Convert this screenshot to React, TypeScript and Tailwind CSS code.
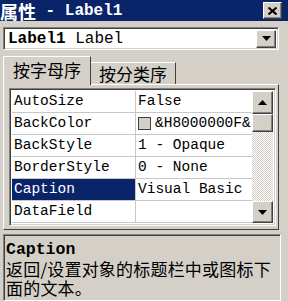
const raised =
  'border border-t-white border-l-white border-r-[#404040] border-b-[#404040] shadow-[inset_-1px_-1px_0_#808080]'
const sunken =
  'border border-t-[#808080] border-l-[#808080] border-r-white border-b-white shadow-[inset_1px_1px_0_#404040,inset_-1px_-1px_0_#d4d0c8]'

const Arrow = ({ up }: { up?: boolean }) => (
  <svg width="9" height="5" viewBox="0 0 9 5">
    <polygon points={up ? '4.5,0 9,5 0,5' : '0,0 9,0 4.5,5'} fill="#000" />
  </svg>
)

const rows: { name: string; value: string; swatch?: boolean; selected?: boolean }[] = [
  { name: 'AutoSize', value: 'False' },
  { name: 'BackColor', value: '&H8000000F&', swatch: true },
  { name: 'BackStyle', value: '1 - Opaque' },
  { name: 'BorderStyle', value: '0 - None' },
  { name: 'Caption', value: 'Visual Basic', selected: true },
  { name: 'DataField', value: '' },
]

const PropRow = ({ row }: { row: (typeof rows)[number] }) => (
  <div className="flex h-[22px] border-b border-[#c8c8c8]">
    <div
      className={`w-[124px] shrink-0 border-r border-[#c8c8c8] pl-[2px] leading-[21px] ${
        row.selected ? 'bg-[#0a246a] text-white' : 'text-black'
      }`}
    >
      {row.name}
    </div>
    <div className="flex flex-1 items-center gap-[4px] overflow-hidden whitespace-nowrap pl-[2px] leading-[21px]">
      {row.swatch && <div className="h-[13px] w-[13px] shrink-0 border border-[#404040] bg-[#d4d0c8]" />}
      <span>{row.value}</span>
    </div>
  </div>
)

export default function App() {
  return (
    <div className="relative flex h-[301px] w-[288px] flex-col overflow-hidden bg-[#d4d0c8] font-['Liberation_Mono','Noto_Sans_CJK_SC',monospace]">
      {/* title bar */}
      <div className="flex h-[21px] shrink-0 items-center justify-between bg-[#0a246a] pr-[6px]">
        <span className="flex items-center whitespace-pre font-bold leading-none text-white">
          <span className="text-[18px] font-['Noto_Sans_CJK_SC',sans-serif]">属性</span>
          <span className="text-[16px]"> - Label1</span>
        </span>
        <div className={`flex h-[17px] w-[19px] items-center justify-center bg-[#d4d0c8] ${raised}`}>
          <svg width="9" height="8" viewBox="0 0 9 8">
            <path d="M0.5 0.5 L8.5 7.5 M8.5 0.5 L0.5 7.5" stroke="#000" strokeWidth="2" />
          </svg>
        </div>
      </div>

      {/* object combobox */}
      <div className={`ml-[3px] mt-[6px] flex h-[23px] w-[276px] items-center bg-white pl-[4px] pr-[2px] ${sunken}`}>
        <span className="flex-1 text-[16px] leading-none text-black">
          <b>Label1</b> Label
        </span>
        <div className={`flex h-[18px] w-[20px] items-center justify-center bg-[#d4d0c8] ${raised}`}>
          <Arrow />
        </div>
      </div>

      {/* tabs */}
      <div className="ml-[3px] mt-[6px] flex h-[29px] items-end">
        <div className="relative z-10 flex h-[29px] w-[88px] items-center justify-center border-l border-t border-r border-t-white border-l-white border-r-[#404040] bg-[#d4d0c8] pb-[2px] text-[17px] text-black font-['Noto_Sans_CJK_SC',sans-serif]">
          按字母序
        </div>
        <div className="flex h-[23px] w-[85px] items-center justify-center border-t border-r border-t-white border-r-[#404040] text-[17px] text-black font-['Noto_Sans_CJK_SC',sans-serif]">
          按分类序
        </div>
      </div>

      {/* tab panel */}
      <div className="mb-[2px] ml-[3px] flex h-[146px] w-[276px] -mt-px flex-col border border-t-white border-l-white border-r-[#404040] border-b-[#404040] pb-[3px] pl-[5px] pr-[2px] pt-[3px]">
        <div className={`flex flex-1 bg-white text-[14.5px] ${sunken} p-[2px]`}>
          <div className="flex flex-1 flex-col">
            {rows.map((r) => (
              <PropRow key={r.name} row={r} />
            ))}
          </div>
          {/* scrollbar */}
          <div className="flex w-[21px] flex-col bg-[repeating-conic-gradient(#d4d0c8_0%_25%,#ffffff_0%_50%)] bg-size-[2px_2px]">
            <div className={`flex h-[23px] items-center justify-center bg-[#d4d0c8] ${raised}`}>
              <Arrow up />
            </div>
            <div className={`h-[18px] bg-[#d4d0c8] ${raised}`} />
            <div className="flex-1" />
            <div className={`flex h-[22px] items-center justify-center bg-[#d4d0c8] ${raised}`}>
              <Arrow />
            </div>
          </div>
        </div>
      </div>

      {/* description */}
      <div className={`ml-[3px] mt-[2px] h-[67px] w-[278px] px-[2px] pt-[6px] text-black ${sunken}`}>
        <div className="text-[16.5px] font-bold leading-[18px]">Caption</div>
        <div className="whitespace-nowrap text-[17px] leading-[19px] tracking-[0.2px] font-['Noto_Sans_CJK_SC',sans-serif]">
          <div>返回/设置对象的标题栏中或图标下</div>
          <div>面的文本。</div>
        </div>
      </div>
    </div>
  )
}
